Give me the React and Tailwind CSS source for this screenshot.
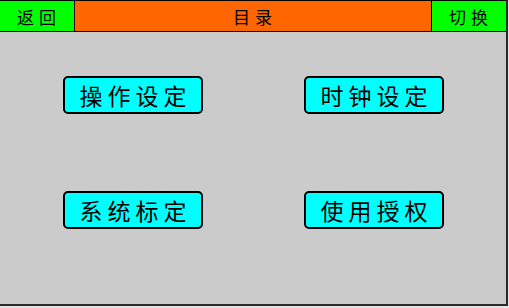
import React from 'react';

const menu = [
  { id: 'op', label: '操作设定' },
  { id: 'clock', label: '时钟设定' },
  { id: 'calib', label: '系统标定' },
  { id: 'auth', label: '使用授权' },
];

const MenuButton = ({ label }) => (
  <button className="w-[140px] h-[38px] bg-[#00ffff] border-2 border-black rounded-[5px] flex items-center justify-center text-[23px] leading-none tracking-[5px] pl-[5px] text-black">
    {label}
  </button>
);

export default function App() {
  return (
    <div className="w-[509px] h-[308px] bg-[#e4e4e4] overflow-hidden" style={{ fontFamily: '"Noto Sans CJK SC", "Noto Sans", sans-serif' }}>
      <div className="w-[508px] h-[306px] bg-[#cbcbcb] border-r-2 border-b-2 border-[#2a2a2a] flex flex-col">
        <div className="h-[32px] flex border-t border-b-[1.5px] border-black text-[17px] leading-none text-black">
          <div className="w-[75px] bg-[#00ff00] border-r-[1.5px] border-black flex items-center justify-center tracking-[5px] pl-[4px]">
            返回
          </div>
          <div className="flex-1 bg-[#ff6600] border-r-[1.5px] border-black flex items-center justify-center tracking-[5px] pl-[4px]">
            目录
          </div>
          <div className="w-[74px] bg-[#00ff00] flex items-center justify-center tracking-[5px] pl-[4px]">
            切换
          </div>
        </div>
        <div className="flex-1 grid grid-cols-[140px_140px] gap-x-[101px] gap-y-[77px] content-start pl-[63px] pt-[44px]">
          {menu.map((m) => (
            <MenuButton key={m.id} label={m.label} />
          ))}
        </div>
      </div>
    </div>
  );
}
